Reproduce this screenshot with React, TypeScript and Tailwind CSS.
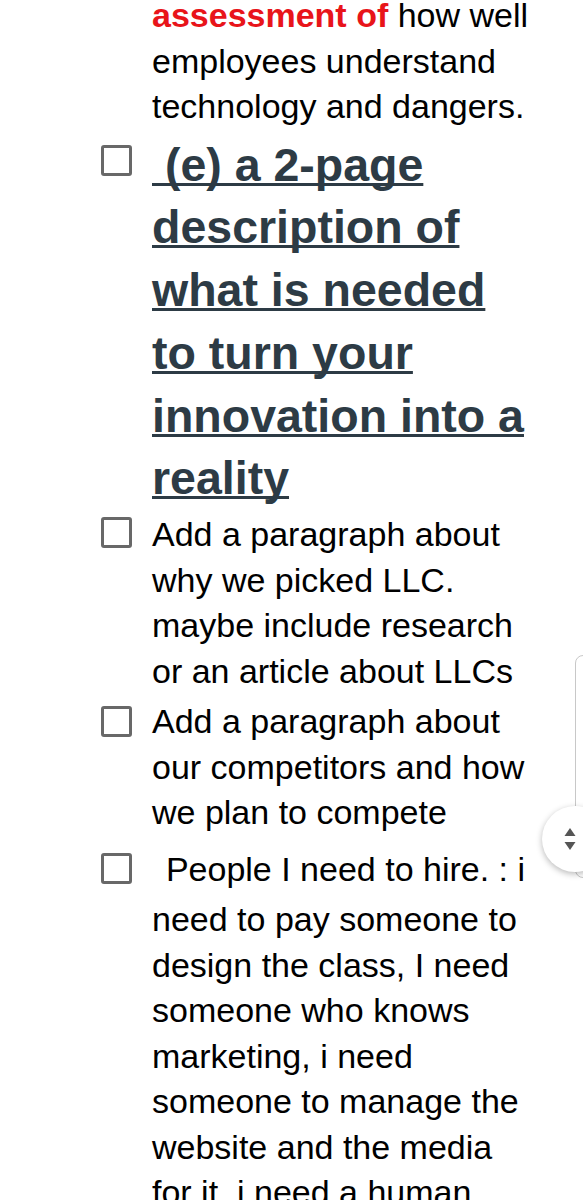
import React from "react";

const Box = ({ top }: { top: string }) => (
  <div className={`w-[31px] h-[31px] shrink-0 border-[3px] border-[#686868] rounded-[3px] ${top}`} />
);

const App = () => {
  return (
    <div className="relative w-[583px] h-[1200px] overflow-hidden bg-white font-['Liberation_Sans',Arial,sans-serif] text-black">
      <div className="pl-[101px] -mt-[7px] flex flex-col">
        {/* tail of the previous item */}
        <div className="pl-[51px] w-[436px] text-[34px] leading-[45.5px]">
          <span className="font-bold text-[#e8141a]">assessment of</span> how well employees understand technology and dangers.
        </div>

        <div className="mt-[4px] flex gap-[20px]">
          <Box top="mt-[11px]" />
          <div className="w-[385px] text-[46.5px] leading-[62.8px] font-bold text-[#2d3b45] underline decoration-[3px] underline-offset-[2px] [text-decoration-skip-ink:none]">
            &nbsp;(e) a 2-page description of what is needed to turn your innovation into a reality
          </div>
        </div>

        <div className="mt-[2px] flex gap-[20px]">
          <Box top="mt-[5px]" />
          <div className="w-[385px] text-[34px] leading-[45.5px]">
            Add a paragraph about why we picked LLC. maybe include research or an article about LLCs
          </div>
        </div>

        <div className="mt-[5px] flex gap-[20px]">
          <Box top="mt-[7px]" />
          <div className="w-[385px] text-[34px] leading-[45.5px]">
            Add a paragraph about our competitors and how we plan to compete
          </div>
        </div>

        <div className="-mt-[3.5px] flex gap-[20px]">
          <Box top="mt-[21px]" />
          <div className="w-[385px] text-[34px] leading-[45.5px]">
            <span className="text-[50px] leading-[65px]">&nbsp;</span>People I need to hire. : i need to pay someone to design the class, I need someone who knows marketing, i need someone to manage the website and the media for it. i need a human
          </div>
        </div>
      </div>

      {/* fast scroll track + handle */}
      <div className="absolute left-[575px] top-[655px] w-[30px] h-[223px] border border-[#c8c8c8] rounded-[8px] bg-white" />
      <div className="absolute left-[542px] top-[806px] w-[66px] h-[66px] rounded-full bg-white shadow-[0_2px_6px_rgba(0,0,0,0.28)] flex items-center pl-[22px]">
        <svg width="12" height="24" viewBox="0 0 12 24">
          <path d="M6 1 L11.5 9 L0.5 9 Z" fill="#555" />
          <path d="M0.5 15 L11.5 15 L6 23 Z" fill="#555" />
        </svg>
      </div>
    </div>
  );
};

export default App;
